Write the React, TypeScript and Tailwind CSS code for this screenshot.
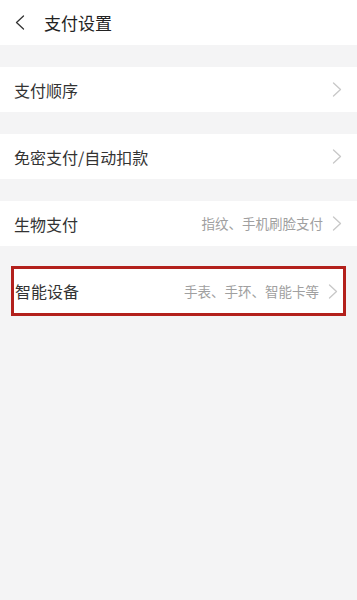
const font = { fontFamily: '"Noto Sans CJK SC", "Noto Sans", sans-serif' };

function Chevron({ left = false }: { left?: boolean }) {
  return (
    <svg
      width="10"
      height="15"
      viewBox="0 0 10 15"
      fill="none"
      stroke="currentColor"
      strokeWidth="1.3"
      strokeLinecap="round"
      strokeLinejoin="round"
    >
      <polyline points={left ? "8.5,1 1.5,7.5 8.5,14" : "1.5,1 8.5,7.5 1.5,14"} />
    </svg>
  );
}

function Row({ label, value }: { label: string; value?: string }) {
  return (
    <div className="flex h-[45px] items-center bg-white pl-[14px] pr-[15px]">
      <span className="text-[16px] text-[#333]">{label}</span>
      <div className="ml-auto flex items-center gap-[9px]">
        {value && <span className="text-[13.5px] text-[#a0a0a0]">{value}</span>}
        <span className="text-[#c8c8c8]">
          <Chevron />
        </span>
      </div>
    </div>
  );
}

export default function App() {
  return (
    <div className="flex min-h-[600px] flex-col bg-[#f4f4f5]" style={font}>
      {/* header */}
      <div className="flex h-[45px] items-center bg-white pl-[15px]">
        <span className="text-[#333]">
          <Chevron left />
        </span>
        <span className="ml-[19px] text-[17px] text-[#222]">支付设置</span>
      </div>

      <div className="mt-[22px] flex flex-col gap-[22px]">
        <Row label="支付顺序" />
        <Row label="免密支付/自动扣款" />
        <Row label="生物支付" value="指纹、手机刷脸支付" />
      </div>

      {/* highlighted row */}
      <div className="mx-[11px] mt-[20px] flex h-[50px] items-center border-[3px] border-[#b3201c] bg-white pl-[1px] pr-[5px]">
        <span className="text-[16px] text-[#333]">智能设备</span>
        <div className="ml-auto flex items-center gap-[9px]">
          <span className="text-[13.5px] text-[#a0a0a0]">手表、手环、智能卡等</span>
          <span className="text-[#c8c8c8]">
            <Chevron />
          </span>
        </div>
      </div>
    </div>
  );
}
